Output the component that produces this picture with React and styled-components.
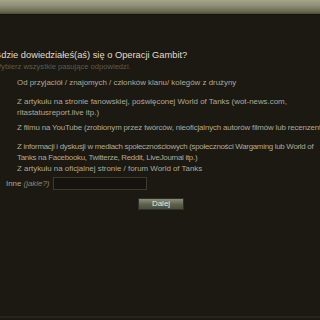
import React from "react";
import styled, { createGlobalStyle } from "styled-components";

const Global = createGlobalStyle`
  html, body { margin: 0; padding: 0; background: #1c1912; }
  body { width: 320px; height: 320px; overflow: hidden; font-family: "Liberation Sans", Arial, sans-serif; }
`;

const Page = styled.div`
  width: 320px;
  height: 320px;
  display: flex;
  flex-direction: column;
  background: #1c1912;
  overflow: hidden;
`;

const TopBar = styled.div`
  height: 14px;
  flex: none;
  background: linear-gradient(#a3a488 0%, #8e8f75 40%, #64654f 85%, #4b4b3c 100%);
  border-bottom: 1px solid #14120c;
`;

const Content = styled.div`
  flex: 1;
  padding-top: 35px;
  display: flex;
  flex-direction: column;
`;

const Title = styled.div`
  font-size: 9.3px;
  line-height: 11px;
  color: #e2dec9;
  text-indent: -6px;
  white-space: nowrap;
`;

const Hint = styled.div`
  font-size: 7.6px;
  line-height: 11px;
  color: #5f5b4d;
  text-indent: -6px;
  white-space: nowrap;
`;

const Options = styled.div`
  display: flex;
  flex-direction: column;
  padding: 5px 0 0 17px;
`;

const Option = styled.div`
  font-size: 7.9px;
  line-height: 11px;
  color: #aeaa96;
  margin-top: ${(p) => p.$gap || 0}px;
  letter-spacing: ${(p) => p.$track || 0}px;
  white-space: nowrap;
`;

const OtherRow = styled.div`
  display: flex;
  align-items: center;
  gap: 4px;
  margin: 3px 0 0 -11px;
`;

const Em = styled.em`
  color: #8a8674;
`;

const Input = styled.div`
  width: 92px;
  height: 11px;
  background: #15130d;
  border: 1px solid #3b3a2f;
`;

const ButtonRow = styled.div`
  display: flex;
  padding: 8px 0 0 138px;
`;

const Button = styled.button`
  width: 46px;
  height: 12px;
  padding: 0;
  border: 1px solid #2e2f25;
  background: linear-gradient(#8b8e77, #5d604c 55%, #4b4d3d);
  color: #ecebdd;
  font-family: "Liberation Sans", Arial, sans-serif;
  font-size: 8px;
  line-height: 10px;
`;

const BottomLine = styled.div`
  height: 2px;
  margin-bottom: 2px;
  background: #26251c;
  flex: none;
`;

export default function App() {
  return (
    <Page>
      <Global />
      <TopBar />
      <Content>
        <Title>Gdzie dowiedziałeś(aś) się o Operacji Gambit?</Title>
        <Hint>Wybierz wszystkie pasujące odpowiedzi.</Hint>
        <Options>
          <Option>Od przyjaciół / znajomych / członków klanu/ kolegów z drużyny</Option>
          <Option $gap={8}>
            Z artykułu na stronie fanowskiej, poświęconej World of Tanks (wot-news.com,
            <br />
            ritastatusreport.live itp.)
          </Option>
          <Option $gap={4} $track={-0.15}>
            Z filmu na YouTube (zrobionym przez twórców, nieoficjalnych autorów filmów lub recenzentów)
          </Option>
          <Option $gap={8} $track={-0.28}>
            Z informacji i dyskusji w mediach społecznościowych (społeczności Wargaming lub World of
            <br />
            Tanks na Facebooku, Twitterze, Reddit, LiveJournal itp.)
          </Option>
          <Option $gap={0}>Z artykułu na oficjalnej stronie / forum World of Tanks</Option>
          <OtherRow>
            <Option>
              Inne <Em>(jakie?)</Em>
            </Option>
            <Input />
          </OtherRow>
        </Options>
        <ButtonRow>
          <Button>Dalej</Button>
        </ButtonRow>
      </Content>
      <BottomLine />
    </Page>
  );
}
